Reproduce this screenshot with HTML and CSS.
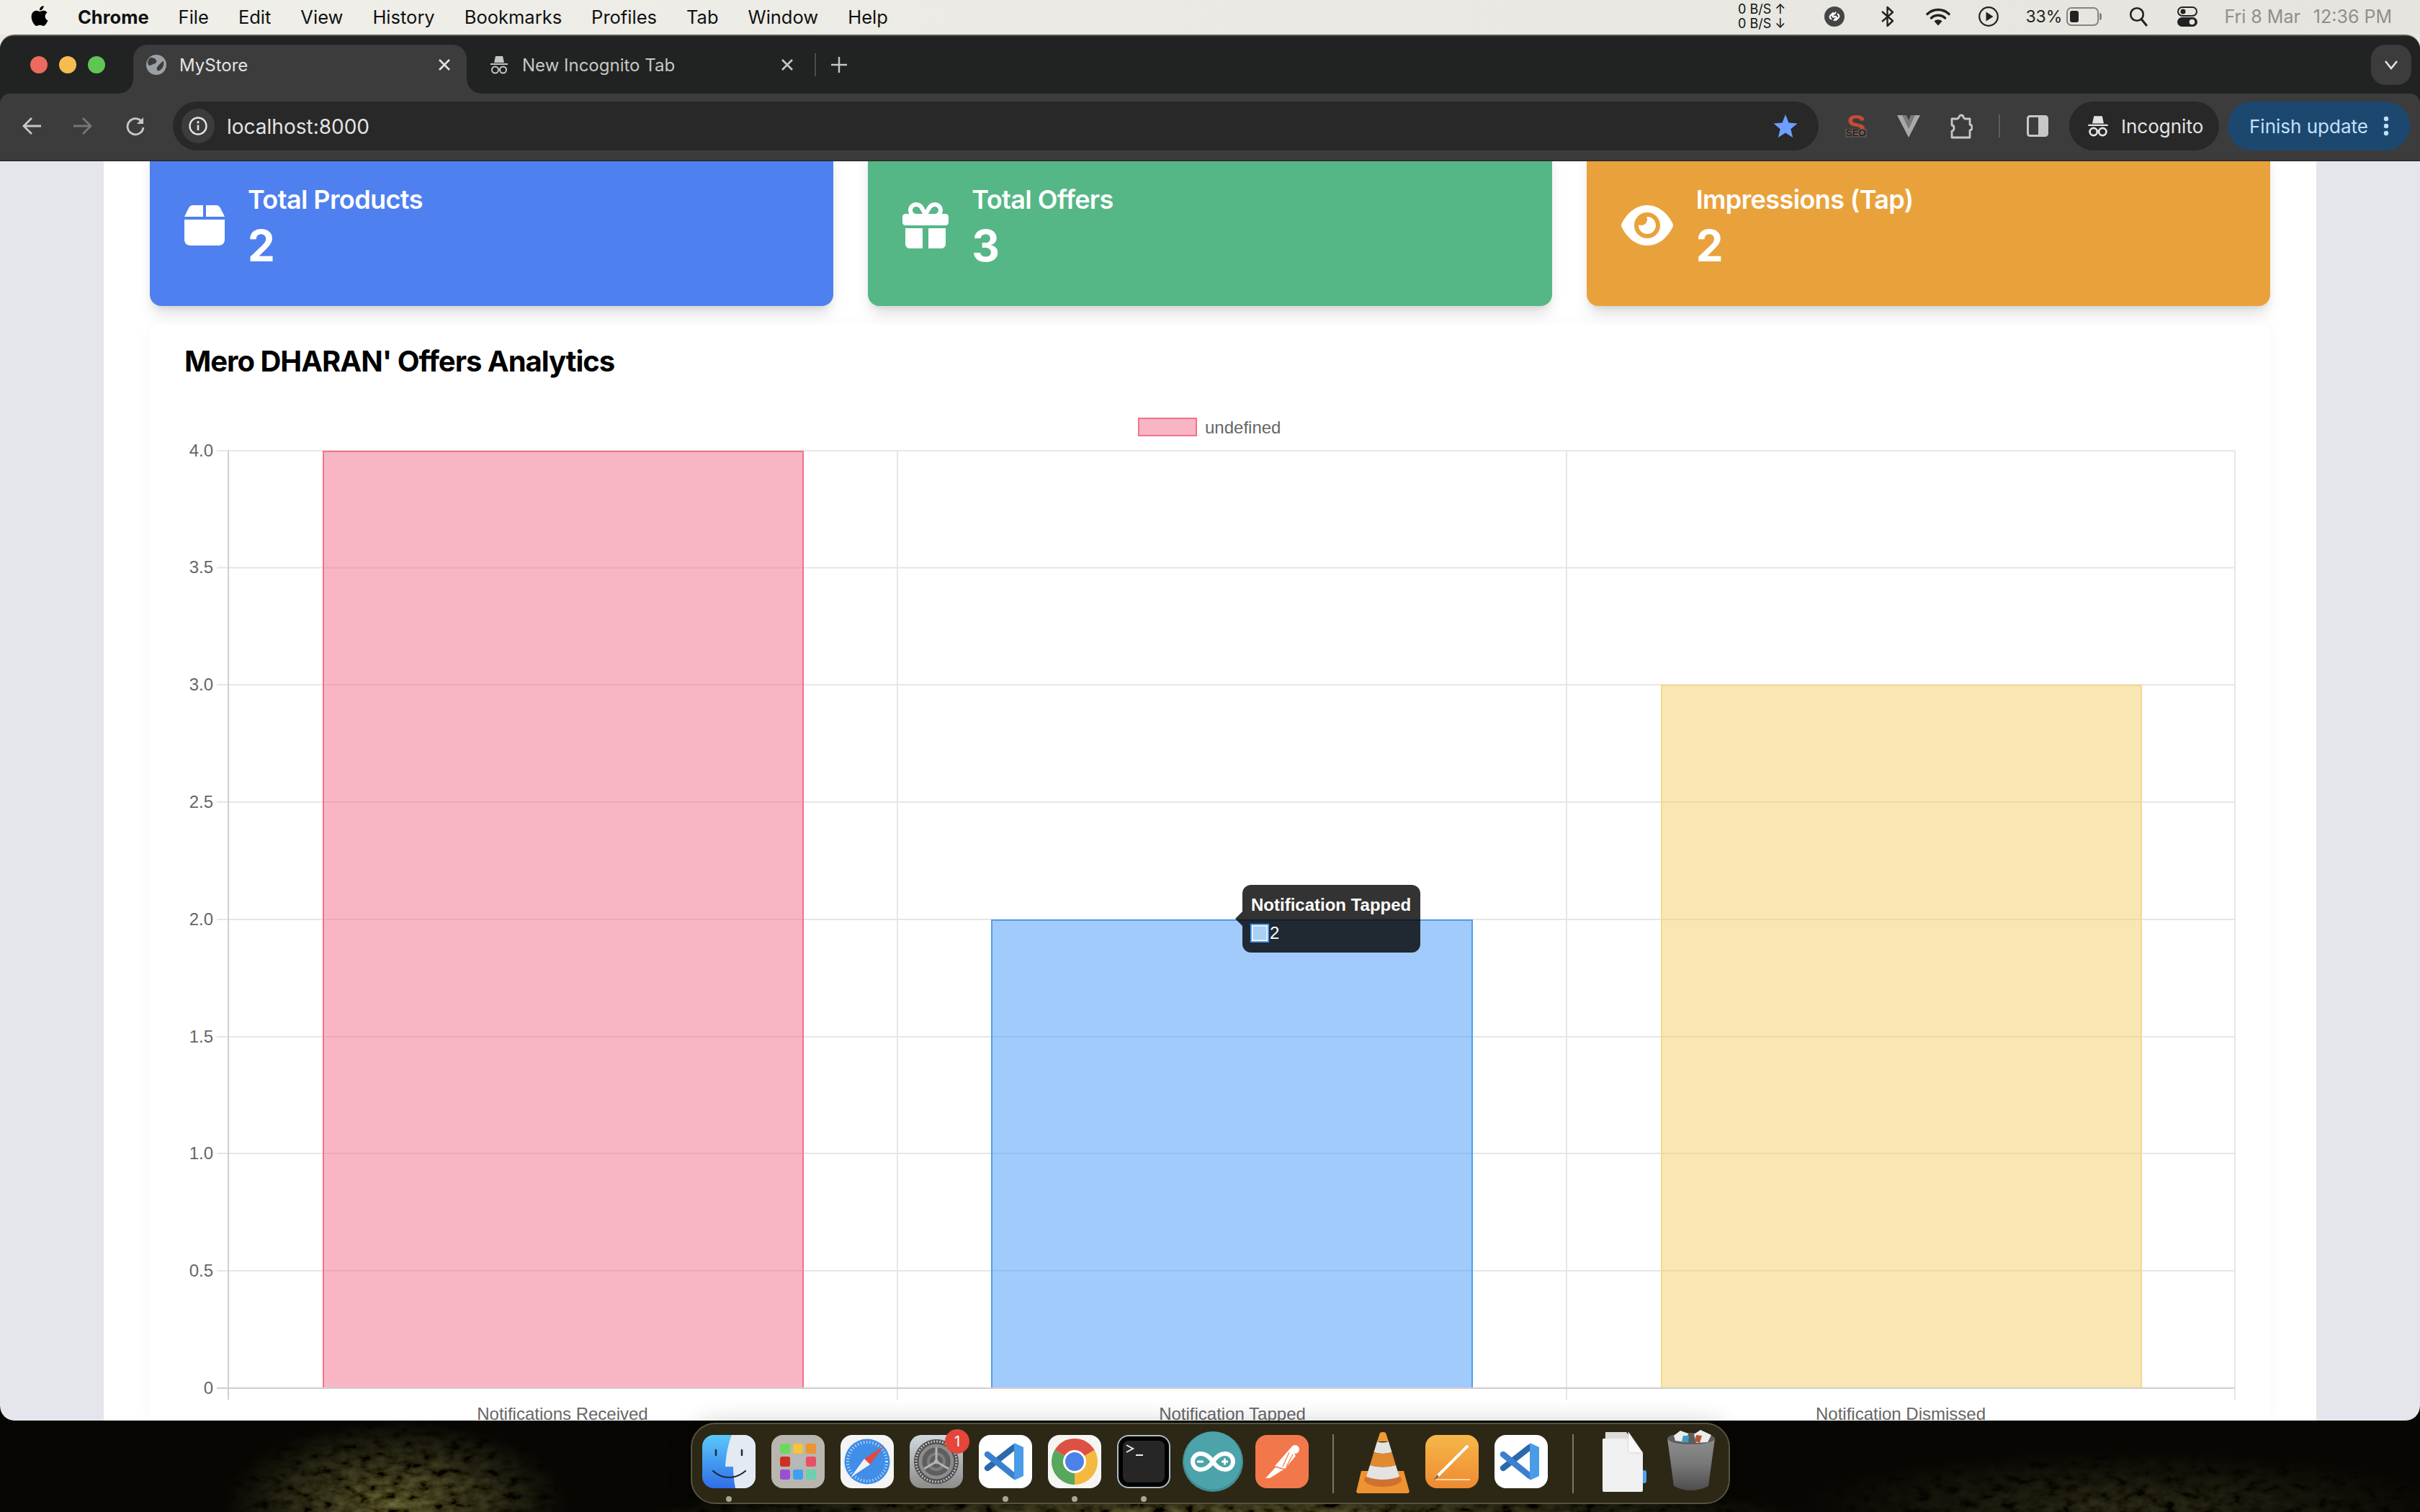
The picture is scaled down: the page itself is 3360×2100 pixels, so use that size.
FILE: index.html
```html
<!DOCTYPE html>
<html lang="en">

<head>
    <meta charset="UTF-8">
    <title>MyStore</title>
    <link rel="stylesheet" href="styles.css">
</head>

<body>
    <!-- mac menu bar -->
    <header class="menubar">
        <svg class="apple" viewBox="0 0 24 24"><path d="M12.152 6.896c-.948 0-2.415-1.078-3.96-1.04-2.04.027-3.91 1.183-4.961 3.014-2.117 3.675-.546 9.103 1.519 12.09 1.013 1.454 2.208 3.09 3.792 3.039 1.52-.065 2.09-.987 3.935-.987 1.831 0 2.35.987 3.96.948 1.637-.026 2.676-1.48 3.676-2.948 1.156-1.688 1.636-3.325 1.662-3.415-.039-.013-3.182-1.221-3.22-4.857-.026-3.04 2.48-4.494 2.597-4.559-1.429-2.09-3.623-2.324-4.39-2.376-2-.156-3.675 1.09-4.61 1.09zM15.53 3.83c.843-1.012 1.4-2.427 1.245-3.83-1.207.052-2.662.805-3.532 1.818-.78.896-1.454 2.338-1.273 3.714 1.338.104 2.715-.688 3.559-1.701"/></svg>
        <nav class="menu">
            <b>Chrome</b><span>File</span><span>Edit</span><span>View</span><span>History</span><span>Bookmarks</span><span>Profiles</span><span>Tab</span><span>Window</span><span>Help</span>
        </nav>
        <div class="status">
            <div class="netspeed"><span>0 B/S ↑</span><span>0 B/S ↓</span></div>
            <svg class="st-shazam" width="28" height="28" viewBox="0 0 28 28"><circle cx="14" cy="14" r="14" fill="#454545"/><path d="M12 9 8.500 12.500a2.800 2.800 0 0 0 0 4l.8.800M16 19l3.500-3.500a2.800 2.800 0 0 0 0-4l-.8-.8M15.500 8.500l-4 4a1.500 1.500 0 0 0 2 2l1 -.5a1.500 1.500 0 0 1 2 2l-3 3" fill="none" stroke="#fff" stroke-width="2.200" stroke-linecap="round"/></svg>
            <svg class="st-bt" width="20" height="30" viewBox="0 0 20 30"><path d="M2 8 17 21 9.500 28V2L17 9 2 22" fill="none" stroke="#222" stroke-width="2.400" stroke-linejoin="round"/></svg>
            <svg class="st-wifi" width="34" height="26" viewBox="0 0 34 26"><path d="M2 9.500C10.500 1.500 23.500 1.500 32 9.500M7.500 15C13 10 21 10 26.500 15" fill="none" stroke="#222" stroke-width="3.400" stroke-linecap="round"/><path d="M11.500 19.500C14.500 16.500 19.500 16.500 22.500 19.500L17 25.500Z" fill="#222"/></svg>
            <svg class="st-play" width="28" height="28" viewBox="0 0 28 28"><circle cx="14" cy="14" r="12.800" fill="none" stroke="#222" stroke-width="2.200"/><path d="M10.500 7.500 20.500 14 10.500 20.500Z" fill="#222"/></svg>
            <span class="st-pct">33%</span>
            <div class="st-battery"><i></i></div>
            <svg class="st-search" width="26" height="28" viewBox="0 0 26 28"><circle cx="11" cy="11" r="8.800" fill="none" stroke="#222" stroke-width="2.600"/><path d="M17.500 18 24 26" stroke="#222" stroke-width="3" stroke-linecap="round"/></svg>
            <svg class="st-control" width="28" height="28" viewBox="0 0 28 28"><rect x="1" y="1" width="26" height="12" rx="6" fill="none" stroke="#222" stroke-width="2"/><circle cx="8" cy="7" r="3.500" fill="#222"/><rect y="15" width="28" height="13" rx="6.500" fill="#222"/><circle cx="20.500" cy="21.500" r="3.800" fill="#e6e5df"/></svg>
            <span class="st-date"><span>Fri 8 Mar</span><span>12:36 PM</span></span>
        </div>
    </header>

    <!-- chrome window -->
    <main class="window">
        <div class="tabstrip">
            <div class="lights"><i class="red"></i><i class="amber"></i><i class="green"></i></div>
            <div class="tab active">
                <svg class="favicon" width="28" height="28" viewBox="0 0 28 28"><circle cx="14" cy="14" r="14" fill="#9aa0a6"/><path d="M6 4c4 0 7 1 8 4s-1 4-4 5-5 3-7 1C1 10 3 6 6 4ZM24 9c1 3 0 8-3 11s-5 3-6 1 0-4 2-6 4-5 7-6Z" fill="#3c3c3c"/></svg>
                <span class="tab-title">MyStore</span>
                <svg class="tab-close" width="24" height="24" viewBox="0 0 24 24"><path d="M5 5 19 19M19 5 5 19" stroke="#e3e3e3" stroke-width="2.600"/></svg>
            </div>
            <div class="tab">
                <svg class="favicon" width="28" height="28" viewBox="0 0 28 28"><path d="M9 2h10l2 9H7ZM2 12h24v2H2Z" fill="#c4c7c5"/><g fill="none" stroke="#c4c7c5" stroke-width="2"><circle cx="8.500" cy="21" r="4.500"/><circle cx="19.500" cy="21" r="4.500"/></g></svg>
                <span class="tab-title">New Incognito Tab</span>
                <svg class="tab-close" width="24" height="24" viewBox="0 0 24 24"><path d="M5 5 19 19M19 5 5 19" stroke="#c4c7c5" stroke-width="2.600"/></svg>
            </div>
            <i class="tab-sep"></i>
            <svg class="new-tab" width="24" height="24" viewBox="0 0 24 24"><path d="M12 1V23M1 12H23" stroke="#c4c7c5" stroke-width="2.400"/></svg>
            <div class="tab-search">
                <svg width="20" height="14" viewBox="0 0 20 14"><path d="M2 2 10 12 18 2" fill="none" stroke="#e3e3e3" stroke-width="2.600"/></svg>
            </div>
        </div>

        <div class="toolbar">
            <svg class="tb-back" width="28" height="28" viewBox="0 0 28 28"><path d="M27 14H3M14 3 3 14 14 25" fill="none" stroke="#c7c7c7" stroke-width="2.800"/></svg>
            <svg class="tb-fwd" width="28" height="28" viewBox="0 0 28 28"><path d="M1 14H25M14 3 25 14 14 25" fill="none" stroke="#777" stroke-width="2.800"/></svg>
            <svg class="tb-reload" width="28" height="28" viewBox="0 0 28 28"><path d="M24 10A11 11 0 1 0 25 16" fill="none" stroke="#c7c7c7" stroke-width="2.800"/><path d="M25 2V11H16Z" fill="#c7c7c7"/></svg>
            <div class="omnibox">
                <div class="site-chip">
                    <svg width="26" height="26" viewBox="0 0 26 26"><circle cx="13" cy="13" r="11.500" fill="none" stroke="#e3e3e3" stroke-width="2.400"/><path d="M13 11.500V19" stroke="#e3e3e3" stroke-width="2.600"/><circle cx="13" cy="7.800" r="1.700" fill="#e3e3e3"/></svg>
                </div>
                <span class="url">localhost:8000</span>
                <svg class="star" width="34" height="32" viewBox="0 0 34 32"><path d="M17 0 21.500 11.500 33.500 12.500 24.300 20.300 27.200 32 17 25.600 6.800 32 9.700 20.300 .5 12.500 12.500 11.500Z" fill="#6e9eff"/></svg>
            </div>
            <div class="ext ext-seo"><span class="seo-s">S</span><span class="seo-tag">SEO</span></div>
            <svg class="ext ext-v" width="32" height="32" viewBox="0 0 32 32"><path d="M0 1H10L16 14 22 1H32L16 32Z" fill="#a9a9a9"/><path d="M7 1H13L16 8 19 1H25L16 20Z" fill="#7a7a7a"/></svg>
            <svg class="ext ext-puzzle" width="32" height="36" viewBox="0 0 32 36"><path d="M3 8H11L13 6C13 2 19 2 19 6L21 8H28V16C32 16 32 24 28 24V34H3V25C7 24 7 17 3 17Z" fill="none" stroke="#c7c7c7" stroke-width="2.800" stroke-linejoin="round"/></svg>
            <i class="tb-sep"></i>
            <svg class="tb-panel" width="30" height="30" viewBox="0 0 30 30"><rect x="1.500" y="1.500" width="27" height="27" rx="3" fill="none" stroke="#c7c7c7" stroke-width="3"/><rect x="16" y="2" width="12" height="26" fill="#c7c7c7"/></svg>
            <div class="pill incognito">
                <svg width="32" height="32" viewBox="0 0 28 28"><path d="M9 2h10l2 9H7ZM2 12h24v2H2Z" fill="#e3e3e3"/><g fill="none" stroke="#e3e3e3" stroke-width="2.400"><circle cx="8.500" cy="21" r="4.500"/><circle cx="19.500" cy="21" r="4.500"/></g></svg>
                <span>Incognito</span>
            </div>
            <div class="pill update">
                <span>Finish update</span>
                <svg width="8" height="28" viewBox="0 0 8 28"><circle cx="4" cy="4" r="3.200"/><circle cx="4" cy="14" r="3.200"/><circle cx="4" cy="24" r="3.200"/></svg>
            </div>
        </div>

        <div class="viewport">
            <div class="page">
                <section class="stats">
                    <div class="stat stat-blue">
                        <svg class="stat-icon" width="56" height="64" viewBox="0 0 448 512"><path d="M50.7 58.5L0 160H208V32H93.7C75.500 32 58.900 42.300 50.700 58.500zM240 160H448L397.300 58.500C389.100 42.300 372.500 32 354.300 32H240V160zM448 192H0V416c0 35.300 28.700 64 64 64H384c35.300 0 64-28.700 64-64V192z"/></svg>
                        <div>
                            <h3>Total Products</h3>
                            <p>2</p>
                        </div>
                    </div>
                    <div class="stat stat-green">
                        <svg class="stat-icon" width="64" height="64" viewBox="0 0 512 512"><path d="M190.500 68.800L225.300 128H224 152c-22.100 0-40-17.900-40-40s17.900-40 40-40h2.200c14.900 0 28.800 7.900 36.300 20.800zM64 88c0 14.400 3.500 28 9.600 40H32c-17.700 0-32 14.300-32 32v64c0 17.700 14.300 32 32 32H480c17.700 0 32-14.300 32-32V160c0-17.700-14.300-32-32-32H438.400c6.100-12 9.600-25.600 9.600-40c0-48.600-39.400-88-88-88h-2.200c-31.900 0-61.500 16.900-77.700 44.400L256 85.500l-24.100-41C215.700 16.900 186.100 0 154.200 0H152C103.400 0 64 39.400 64 88zm336 0c0 22.100-17.900 40-40 40H288h-1.300l34.800-59.200C329.100 55.900 342.900 48 357.800 48H360c22.100 0 40 17.900 40 40zM32 288V464c0 26.500 21.500 48 48 48H224V288H32zM288 512H432c26.500 0 48-21.500 48-48V288H288V512z"/></svg>
                        <div>
                            <h3>Total Offers</h3>
                            <p>3</p>
                        </div>
                    </div>
                    <div class="stat stat-orange">
                        <svg class="stat-icon" width="72" height="64" viewBox="0 0 576 512"><path d="M288 32c-80.800 0-145.500 36.800-192.600 80.600C48.600 156 17.300 208 2.500 243.700c-3.300 7.900-3.300 16.700 0 24.600C17.300 304 48.600 356 95.400 399.400C142.500 443.200 207.200 480 288 480s145.500-36.800 192.600-80.600c46.800-43.500 78.100-95.400 93-131.100c3.300-7.900 3.300-16.700 0-24.600c-14.900-35.700-46.200-87.700-93-131.100C433.500 68.800 368.800 32 288 32zM144 256a144 144 0 1 1 288 0 144 144 0 1 1 -288 0zm144-64c0 35.300-28.700 64-64 64c-7.100 0-13.900-1.200-20.300-3.300c-5.500-1.800-11.900 1.600-11.700 7.400c.3 6.900 1.300 13.800 3.200 20.700c13.700 51.200 66.400 81.600 117.600 67.900s81.600-66.400 67.900-117.600c-11.100-41.500-47.800-69.400-88.600-71.100c-5.800-.2-9.200 6.100-7.400 11.700c2.100 6.400 3.300 13.200 3.300 20.300z"/></svg>
                        <div>
                            <h3>Impressions (Tap)</h3>
                            <p>2</p>
                        </div>
                    </div>
                </section>

                <section class="chart-card">
                    <h2>Mero DHARAN' Offers Analytics</h2>
                    <svg class="chart" width="2848" height="1420" viewBox="256 560 2848 1420">
                        <rect class="legend-box" x="1581" y="581" width="80" height="24"/>
                        <text class="chart-text" x="1673" y="602">undefined</text>

                        <g class="grid">
                            <line x1="301" x2="3103" y1="626" y2="626"/>
                            <line x1="301" x2="3103" y1="788.500" y2="788.500"/>
                            <line x1="301" x2="3103" y1="951" y2="951"/>
                            <line x1="301" x2="3103" y1="1114" y2="1114"/>
                            <line x1="301" x2="3103" y1="1277" y2="1277"/>
                            <line x1="301" x2="3103" y1="1440" y2="1440"/>
                            <line x1="301" x2="3103" y1="1602" y2="1602"/>
                            <line x1="301" x2="3103" y1="1765" y2="1765"/>
                            <line x1="1246" x2="1246" y1="626" y2="1944"/>
                            <line x1="2175" x2="2175" y1="626" y2="1944"/>
                            <line x1="3103" x2="3103" y1="626" y2="1944"/>
                        </g>
                        <g class="axis">
                            <line x1="317" x2="317" y1="626" y2="1944"/>
                            <line x1="301" x2="3103" y1="1928" y2="1928"/>
                        </g>

                        <g class="chart-text ticks">
                            <text x="296" y="634">4.0</text>
                            <text x="296" y="796">3.5</text>
                            <text x="296" y="959">3.0</text>
                            <text x="296" y="1122">2.5</text>
                            <text x="296" y="1285">2.0</text>
                            <text x="296" y="1448">1.5</text>
                            <text x="296" y="1610">1.0</text>
                            <text x="296" y="1773">0.5</text>
                            <text x="296" y="1936">0</text>
                        </g>

                        <rect class="bar-pink" x="448" y="626" width="668" height="1301"/>
                        <path class="edge-pink" d="M449 1927V627H1115V1927"/>
                        <rect class="bar-blue" x="1376" y="1277" width="669" height="650"/>
                        <path class="edge-blue" d="M1377 1927V1278H2044V1927"/>
                        <rect class="bar-yellow" x="2306" y="951" width="668" height="976"/>
                        <path class="edge-yellow" d="M2307 1927V952H2973V1927"/>

                        <g class="chart-text labels">
                            <text x="781" y="1972">Notifications Received</text>
                            <text x="1711" y="1972">Notification Tapped</text>
                            <text x="2639" y="1972">Notification Dismissed</text>
                        </g>
                    </svg>
                    <div class="tooltip">
                        <strong>Notification Tapped</strong>
                        <div class="tooltip-row"><i></i><span>2</span></div>
                    </div>
                </section>
            </div>
        </div>
    </main>

    <!-- desktop and dock -->
    <footer class="desktop">
        <svg class="wallpaper" width="3360" height="127" viewBox="0 0 3360 127">
            <defs>
                <filter id="leaves" x="0" y="0" width="100%" height="100%">
                    <feTurbulence type="fractalNoise" baseFrequency="0.05 0.09" numOctaves="3" seed="7"/>
                    <feColorMatrix values="0 0 0 1 -.25  0 0 0 .95 -.25  0 0 0 .3 -.1  0 0 0 0 1"/>
                </filter>
                <radialGradient id="patch">
                    <stop offset="0" stop-color="#fff"/>
                    <stop offset="1" stop-color="#000"/>
                </radialGradient>
                <mask id="patches">
                    <ellipse cx="550" cy="115" rx="240" ry="115" fill="url(#patch)"/>
                    <ellipse cx="1700" cy="135" rx="820" ry="60" fill="url(#patch)"/>
                    <ellipse cx="2950" cy="120" rx="460" ry="80" fill="url(#patch)" opacity=".4"/>
                </mask>
            </defs>
            <rect class="leaves" width="3360" height="127" filter="url(#leaves)" mask="url(#patches)"/>
        </svg>

        <div class="dock">
            <!-- finder -->
            <svg class="dock-icon" width="74" height="74" viewBox="0 0 74 74">
                <defs>
                    <linearGradient id="finderBlue" x1="0" y1="0" x2="0" y2="1"><stop offset="0" stop-color="#5ac8fb"/><stop offset="1" stop-color="#2f6ee8"/></linearGradient>
                    <clipPath id="squircle"><rect width="74" height="74" rx="16"/></clipPath>
                </defs>
                <g clip-path="url(#squircle)">
                    <rect width="74" height="74" fill="url(#finderBlue)"/>
                    <path d="M41 0H74V74H46C44 64 43 54 43 44H32C33 28 36 12 41 0Z" fill="#e4eaf2"/>
                </g>
                <path d="M19 21V28M55 21V28" stroke="#1f2a3a" stroke-width="2.500" stroke-linecap="round"/>
                <path d="M15 50C28 62 46 62 60 50" fill="none" stroke="#1f2a3a" stroke-width="2.200" stroke-linecap="round"/>
            </svg>
            <!-- launchpad -->
            <svg class="dock-icon" width="74" height="74" viewBox="0 0 74 74">
                <rect width="74" height="74" rx="16" fill="#b9b6af"/>
                <rect x="12" y="12" width="14" height="14" rx="3" fill="#6bd95e"/>
                <rect x="30" y="12" width="14" height="14" rx="3" fill="#f6c33a"/>
                <rect x="48" y="12" width="14" height="14" rx="3" fill="#ee9430"/>
                <rect x="12" y="30" width="14" height="14" rx="3" fill="#cd3023"/>
                <rect x="30" y="30" width="14" height="14" rx="3" fill="#b5b9bc"/>
                <rect x="48" y="30" width="14" height="14" rx="3" fill="#e84f66"/>
                <rect x="12" y="48" width="14" height="14" rx="3" fill="#9a4fd0"/>
                <rect x="30" y="48" width="14" height="14" rx="3" fill="#3f9ff5"/>
                <rect x="48" y="48" width="14" height="14" rx="3" fill="#6bd0ae"/>
            </svg>
            <!-- safari -->
            <svg class="dock-icon" width="74" height="74" viewBox="0 0 74 74">
                <rect width="74" height="74" rx="16" fill="#f4f4f4"/>
                <circle cx="37" cy="37" r="31.500" fill="#3f8ee8"/>
                <circle cx="37" cy="37" r="27" fill="none" stroke="#dcebfa" stroke-width="4" stroke-dasharray="1 3.200"/>
                <path d="M60 15 41 41 33 33Z" fill="#e5483c"/>
                <path d="M14 59 33 33 41 41Z" fill="#f2f2f2"/>
            </svg>
            <!-- system settings -->
            <div class="dock-badged">
                <svg class="dock-icon" width="74" height="74" viewBox="0 0 74 74">
                    <defs><linearGradient id="settingsBg" x1="0" y1="0" x2="0" y2="1"><stop offset="0" stop-color="#cfd9de"/><stop offset="1" stop-color="#8d8d8b"/></linearGradient></defs>
                    <rect width="74" height="74" rx="16" fill="url(#settingsBg)"/>
                    <circle cx="37" cy="37" r="31" fill="#4e4e4e"/>
                    <circle cx="37" cy="37" r="28" fill="none" stroke="#c9c9c9" stroke-width="3" stroke-dasharray="1.800 2.200"/>
                    <circle cx="37" cy="37" r="22" fill="none" stroke="#8c8c8c" stroke-width="5"/>
                    <circle cx="37" cy="37" r="19" fill="#5f5f5f"/>
                    <circle cx="37" cy="37" r="11" fill="none" stroke="#7d7d7d" stroke-width="4"/>
                    <path d="M37 37V17M37 37 20 47M37 37 54 47" stroke="#b5b5b5" stroke-width="3"/>
                    <circle cx="37" cy="37" r="3" fill="#b5b5b5"/>
                </svg>
                <span class="badge">1</span>
            </div>
            <!-- vscode -->
            <svg class="dock-icon" width="74" height="74" viewBox="0 0 74 74">
                <g id="vscode">
                    <rect width="74" height="74" rx="16" fill="#fff"/>
                    <path d="M12 46 49 17" stroke="#2a69ae" stroke-width="8.500" stroke-linecap="round"/>
                    <path d="M12 27 49 57" stroke="#3b80cf" stroke-width="8.500" stroke-linecap="round"/>
                    <path d="M49 11 62 17V57L49 63Z" fill="#4a9be8"/>
                </g>
            </svg>
            <!-- chrome -->
            <svg class="dock-icon" width="74" height="74" viewBox="0 0 74 74">
                <rect width="74" height="74" rx="16" fill="#f5f5f3"/>
                <path d="M37 37 9.300 21A32 32 0 0 1 64.700 21Z" fill="#dd5144"/>
                <path d="M37 37 64.700 21A32 32 0 0 1 37 69Z" fill="#f4b93f"/>
                <path d="M37 37 37 69A32 32 0 0 1 9.300 21Z" fill="#57a75d"/>
                <circle cx="37" cy="37" r="16" fill="#fff"/>
                <circle cx="37" cy="37" r="13" fill="#4c82e8"/>
            </svg>
            <!-- terminal -->
            <svg class="dock-icon" width="74" height="74" viewBox="0 0 74 74">
                <rect width="74" height="74" rx="16" fill="#aebcc4"/>
                <rect x="2" y="2" width="70" height="70" rx="14" fill="#000"/>
                <rect x="8" y="8" width="58" height="58" rx="8" fill="#262626"/>
                <path d="M13 14 22 19 13 24" fill="none" stroke="#eee" stroke-width="2"/>
                <path d="M26 28H36" stroke="#eee" stroke-width="2"/>
            </svg>
            <!-- arduino -->
            <svg class="dock-icon dock-round" width="84" height="84" viewBox="0 0 84 84">
                <circle cx="42" cy="42" r="42" fill="#3f8f96"/>
                <circle cx="42" cy="40.500" r="40" fill="#4ca3aa"/>
                <path d="M42 42C36 33 30 31 25 31A11 11 0 0 0 25 53C30 53 36 51 42 42C48 33 54 31 59 31A11 11 0 0 1 59 53C54 53 48 51 42 42Z" fill="none" stroke="#fff" stroke-width="6"/>
                <path d="M20 42H29M54 42H63M58.500 37.500V46.500" stroke="#fff" stroke-width="2.800"/>
            </svg>
            <!-- postman -->
            <svg class="dock-icon" width="74" height="74" viewBox="0 0 74 74">
                <rect width="74" height="74" rx="16" fill="#f2784b"/>
                <circle cx="55" cy="20" r="6" fill="#fff"/>
                <path d="M49 18 56 29 41 47 27 43Z" fill="#fff"/>
                <path d="M28 45 39 48 20 60H14Z" fill="#fff"/>
                <path d="M47 24 38 44M52 27 43 44" stroke="#f2784b" stroke-width="1.200"/>
            </svg>
            <i class="dock-sep sep-first"></i>
            <!-- vlc -->
            <svg class="dock-icon dock-vlc" width="74" height="85" viewBox="0 0 74 85">
                <path d="M7 54H66L74 83 72 85H2L0 83Z" fill="#ee9330"/>
                <ellipse cx="37" cy="66" rx="26" ry="10" fill="#cf7230"/>
                <path d="M33 1Q37-1 41 1L45 13H29Z" fill="#ef9a34"/>
                <path d="M29 13Q37 16 45 13L49.600 28Q37 32 24.400 28Z" fill="#e3e3e3"/>
                <path d="M24.400 28Q37 32 49.600 28L55 46Q37 51 19 46Z" fill="#e28a30"/>
                <path d="M19 46Q37 51 55 46L60 62Q37 70 14 62Z" fill="#e3e3e3"/>
            </svg>
            <!-- pages -->
            <svg class="dock-icon" width="74" height="74" viewBox="0 0 74 74">
                <defs><linearGradient id="pagesBg" x1="0" y1="0" x2="0" y2="1"><stop offset="0" stop-color="#f6b84a"/><stop offset="1" stop-color="#ee8a32"/></linearGradient></defs>
                <rect width="74" height="74" rx="16" fill="url(#pagesBg)"/>
                <path d="M14 62H62" stroke="#f8d9a8" stroke-width="2"/>
                <path d="M16 58 58 16" stroke="#fff" stroke-width="4" stroke-linecap="round"/>
                <path d="M12 63 16 55 19 58Z" fill="#8a5a2a"/>
            </svg>
            <!-- vscode, second copy -->
            <svg class="dock-icon" width="74" height="74" viewBox="0 0 74 74"><use href="#vscode"/></svg>
            <i class="dock-sep sep-second"></i>
            <!-- document stack -->
            <svg class="dock-icon dock-doc" width="62" height="87" viewBox="0 0 62 87">
                <path d="M4 4H33L55 32V60H3Z" fill="#dcdcdc"/>
                <path d="M55 57H58Q61 57 61 60V72Q61 75 58 75H55Z" fill="#4ba3ee"/>
                <path d="M1 13H36L56 33V85Q56 87 54 87H2Q0 87 0 85V14Z" fill="#f0f0f0"/>
                <path d="M36 4 56 33H40Q35 33 35 28Z" fill="#f8f8f8" stroke="#cfcfcf" stroke-width=".8"/>
            </svg>
            <!-- trash -->
            <svg class="dock-icon dock-trash" width="66" height="85" viewBox="0 0 66 85">
                <defs><linearGradient id="binBg" x1="0" y1="0" x2="0" y2="1"><stop offset="0" stop-color="#8e8e8e"/><stop offset=".5" stop-color="#777"/><stop offset="1" stop-color="#4d4d4d"/></linearGradient></defs>
                <path d="M0 12Q33 26 66 12L57 78Q33 90 9 78Z" fill="url(#binBg)"/>
                <ellipse cx="33" cy="12" rx="33" ry="8" fill="#5d5d5d"/>
                <path d="M9 8 18 1 29 5 25 17 11 15ZM37 6 46 0 61 7 56 17 40 18Z" fill="#ececec"/>
                <path d="M22 8 30 8 29 18 20 16Z" fill="#3d9bc4"/>
                <path d="M40 7 48 8 45 18 38 16Z" fill="#b5552f"/>
            </svg>
            <!-- running indicators -->
            <i class="dock-dot dot-a"></i><i class="dock-dot dot-b"></i><i class="dock-dot dot-c"></i><i class="dock-dot dot-d"></i>
        </div>
    </footer>
</body>

</html>
```

FILE: styles.css
```css
* {
    box-sizing: border-box;
}

html,
body {
    margin: 0;
    height: 2100px;
    overflow: hidden;
}

body {
    width: 3360px;
    display: flex;
    flex-direction: column;
    background: linear-gradient(#e9e8e2 0, #e9e8e2 80px, #070603 81px);
    font-family: Inter, "Liberation Sans", sans-serif;
}

/* menu bar */
.menubar {
    height: 48px;
    flex: none;
    display: flex;
    align-items: center;
    padding: 0 39px 2px 41px;
    background: linear-gradient(90deg, #f0efea, #e5e4de);
    color: #111;
    font-size: 25.500px;
}

.apple {
    width: 28px;
    height: 30px;
    fill: #000;
    margin-bottom: 2px;
}

.menu {
    display: flex;
    gap: 41px;
    margin-left: 39px;
}

.status {
    margin-left: auto;
    display: flex;
    align-items: center;
}

.netspeed {
    display: flex;
    flex-direction: column;
    font-size: 18px;
    line-height: 20px;
    white-space: nowrap;
}

.st-shazam { margin-left: 54px; }
.st-bt { margin-left: 50px; }
.st-wifi { margin-left: 43px; }
.st-play { margin-left: 39px; }
.st-pct { margin-left: 37px; font-size: 23px; color: #222; }

.st-battery {
    width: 45px;
    height: 26px;
    margin-left: 6px;
    padding: 3px;
    position: relative;
    border: 2px solid #85847f;
    border-radius: 7px;
}

.st-battery::after {
    content: "";
    position: absolute;
    right: -6px;
    top: 6px;
    width: 3px;
    height: 10px;
    border-radius: 0 3px 3px 0;
    background: #85847f;
}

.st-battery i {
    display: block;
    width: 12px;
    height: 100%;
    background: #222;
    border-radius: 3px;
}

.st-search { margin-left: 42px; }
.st-control { margin-left: 41px; }

.st-date {
    display: flex;
    gap: 18px;
    margin-left: 37px;
    color: #8f8f8b;
    font-size: 25px;
}

/* browser window */
.window {
    height: 1925px;
    flex: none;
    display: flex;
    flex-direction: column;
    overflow: hidden;
    border-top: 2px solid #5a5a58;
    border-radius: 20px;
    background: #202322;
}

.tabstrip {
    height: 80px;
    flex: none;
    display: flex;
    align-items: center;
    padding-left: 42px;
    background: #202322;
}

.lights {
    display: flex;
    gap: 16px;
    margin-right: 39px;
}

.lights i {
    width: 24px;
    height: 24px;
    border-radius: 50%;
}

.lights .red { background: #ee6a5f; }
.lights .amber { background: #f5bd4f; }
.lights .green { background: #61c555; }

.tab {
    width: 463px;
    height: 68px;
    align-self: flex-end;
    display: flex;
    align-items: center;
    padding: 0 19px 12px 18px;
    position: relative;
    color: #e3e3e3;
    font-size: 24px;
}

.tab + .tab {
    margin-left: 13px;
    color: #c4c7c5;
}

.tab.active {
    background: #3c3c3c;
    border-radius: 20px 20px 0 0;
}

.tab.active::before,
.tab.active::after {
    content: "";
    position: absolute;
    bottom: 0;
    width: 20px;
    height: 20px;
}

.tab.active::before {
    left: -20px;
    background: radial-gradient(circle at 0 0, #202322 19.500px, #3c3c3c 20px);
}

.tab.active::after {
    right: -20px;
    background: radial-gradient(circle at 100% 0, #202322 19.500px, #3c3c3c 20px);
}

.tab-title {
    margin-left: 18px;
}

.tab-close {
    margin-left: auto;
}

.tab-sep {
    width: 2px;
    height: 32px;
    margin-left: 7px;
    background: #4a4c4b;
}

.new-tab {
    margin-left: 20px;
}

.tab-search {
    width: 56px;
    height: 56px;
    margin: 0 12px 0 auto;
    display: flex;
    align-items: center;
    justify-content: center;
    border-radius: 20px;
    background: #3c3c3c;
}

.toolbar {
    height: 94px;
    flex: none;
    display: flex;
    align-items: center;
    padding: 0 0 2px 30px;
    background: #3c3c3c;
    border-bottom: 2px solid #2e2e2e;
    border-radius: 14px 14px 0 0;
}

.tb-fwd { margin-left: 43px; }
.tb-reload { margin-left: 45px; }

.omnibox {
    width: 2285px;
    height: 68px;
    margin-left: 38px;
    display: flex;
    align-items: center;
    padding: 0 29px 0 12px;
    border-radius: 34px;
    background: #282828;
}

.site-chip {
    width: 46px;
    height: 48px;
    display: flex;
    align-items: center;
    justify-content: center;
    border-radius: 24px;
    background: #3c3c3c;
}

.url {
    margin: 2px 0 0 17px;
    color: #e3e3e3;
    font-size: 28px;
}

.star {
    margin-left: auto;
}

.ext-seo {
    width: 32px;
    height: 32px;
    margin-left: 36px;
    position: relative;
    font-family: "Liberation Sans", sans-serif;
    font-weight: 700;
    text-align: center;
}

.seo-s {
    display: block;
    color: #c94b33;
    font-size: 40px;
    line-height: 30px;
}

.seo-tag {
    position: absolute;
    left: 1px;
    right: 1px;
    bottom: 0;
    height: 12px;
    background: rgba(90, 90, 90, 0.7);
    color: #111;
    font-size: 13px;
    font-weight: 400;
    line-height: 12px;
}

.ext-v { margin-left: 41px; }
.ext-puzzle { margin-left: 41px; }

.tb-sep {
    width: 2px;
    height: 32px;
    margin-left: 36px;
    background: #5c5c5c;
}

.tb-panel { margin-left: 37px; }

.pill {
    height: 68px;
    display: flex;
    align-items: center;
    border-radius: 34px;
    font-size: 26px;
}

.pill.incognito {
    width: 208px;
    margin-left: 29px;
    padding-left: 24px;
    gap: 16px;
    background: #282828;
    color: #e3e3e3;
}

.pill.update {
    width: 253px;
    margin-left: 12px;
    padding: 0 30px;
    justify-content: space-between;
    background: #1c4870;
    color: #c2e0fa;
    white-space: nowrap;
}

.pill.update svg {
    fill: #c2e0fa;
    flex: none;
    margin-right: -1px;
}

/* page under the browser chrome, scrolled by 24px */
.viewport {
    flex: 1;
    min-height: 0;
    overflow: hidden;
    background: #e4e6eb;
    border-radius: 0 0 20px 20px;
}

.page {
    width: 3072px;
    margin: -24px 0 0 144px;
    padding: 0 64px;
    background: #fff;
}

.stats {
    display: grid;
    grid-template-columns: repeat(3, 1fr);
    gap: 48px;
}

.stat {
    height: 225px;
    display: flex;
    align-items: center;
    gap: 32px;
    padding: 0 48px;
    border-radius: 16px;
    color: #fff;
    box-shadow: 0 14px 20px -4px rgba(0, 0, 0, 0.13), 0 6px 8px -4px rgba(0, 0, 0, 0.08);
}

.stat-blue { background: #4f80ef; }
.stat-green { background: #55b786; }
.stat-orange { background: #e9a23b; }

.stat-icon {
    fill: #fff;
    flex: none;
}

.stat h3 {
    margin: 0;
    font-size: 36px;
    font-weight: 600;
    letter-spacing: -0.6px;
    line-height: 56px;
}

.stat p {
    margin: 0;
    font-size: 60px;
    font-weight: 700;
    line-height: 72px;
}

.chart-card {
    margin-top: 24px;
    padding: 24px 48px 0;
    position: relative;
    border-radius: 16px;
    box-shadow: 0 0 24px rgba(0, 0, 0, 0.03);
}

.chart-card h2 {
    margin: 1px 0 30px;
    color: #000;
    font-size: 40px;
    font-weight: 700;
    letter-spacing: -1px;
    line-height: 56px;
}

.chart {
    display: block;
}

.chart-text {
    fill: #666;
    font-family: "Liberation Sans", sans-serif;
    font-size: 24px;
}

.ticks { text-anchor: end; }
.labels { text-anchor: middle; }

.legend-box {
    fill: #f8b6c4;
    stroke: #f47189;
    stroke-width: 2;
}

.grid line {
    stroke: #e6e6e6;
    stroke-width: 2;
}

.axis line {
    stroke: #cfcfcf;
    stroke-width: 2;
}

.bar-pink { fill: rgba(241, 110, 137, 0.5); }
.bar-blue { fill: rgba(67, 151, 247, 0.5); }
.bar-yellow { fill: rgba(245, 205, 103, 0.5); }

.edge-pink,
.edge-blue,
.edge-yellow {
    fill: none;
    stroke-width: 2;
}

.edge-pink { stroke: #f47189; }
.edge-blue { stroke: #4f9fef; }
.edge-yellow { stroke: #f5d98c; }

.tooltip {
    position: absolute;
    left: 1517px;
    top: 780px;
    width: 247px;
    height: 94px;
    padding: 11px 12px;
    border-radius: 12px;
    background: rgba(0, 0, 0, 0.8);
    color: #fff;
    font-family: "Liberation Sans", sans-serif;
    font-size: 24px;
    line-height: 34px;
    white-space: nowrap;
}

.tooltip::before {
    content: "";
    position: absolute;
    left: -10px;
    top: 37px;
    border: 10px solid transparent;
    border-left: 0;
    border-right-color: rgba(0, 0, 0, 0.8);
}

.tooltip strong {
    display: block;
}

.tooltip-row {
    display: flex;
    align-items: center;
    gap: 1px;
    margin-top: 5px;
    margin-left: -1px;
}

.tooltip-row i {
    width: 26px;
    height: 26px;
    border: 2px solid #4f9fef;
    background: #a9d0f3;
    box-shadow: inset 0 0 0 1.500px #fff;
}

/* desktop */
.desktop {
    flex: 1;
    position: relative;
    display: flex;
    justify-content: center;
    padding-top: 3px;
}

.wallpaper {
    position: absolute;
    left: 0;
    top: 0;
}

.leaves {
    opacity: 0.55;
}

.dock {
    width: 1443px;
    height: 113px;
    position: relative;
    z-index: 2;
    display: flex;
    align-items: flex-start;
    margin-left: 1px;
    padding: 15px 0 0 14px;
    gap: 22px;
    border: 2px solid #55533f;
    border-radius: 34px;
    background: #2d2815;
    box-shadow: 0 0 34px rgba(0, 0, 0, 0.2);
}

.dock-icon {
    flex: none;
    display: block;
}

.dock-badged {
    position: relative;
    flex: none;
}

.badge {
    position: absolute;
    left: 49px;
    top: -8px;
    width: 34px;
    height: 34px;
    border-radius: 50%;
    background: #e5463a;
    color: #fff;
    font-size: 20px;
    line-height: 34px;
    text-align: center;
}

.dock-round {
    margin: -5px -5px 0;
}

.dock-vlc {
    margin: -4px 0 0 0;
}

.dock-sep {
    width: 2px;
    height: 82px;
    flex: none;
    background: #7c7860;
}

.sep-first {
    margin: -1px 9px 0 11px;
}

.sep-second {
    margin: -1px 18px 0 12px;
}

.dock-doc {
    margin: -8px 0 0 0;
}

.dock-trash {
    margin: -7px 0 0 6px;
}

.dock-dot {
    position: absolute;
    top: 100px;
    width: 8px;
    height: 8px;
    border-radius: 50%;
    background: #a8a595;
}

.dot-a { left: 47px; }
.dot-b { left: 431px; }
.dot-c { left: 527px; }
.dot-d { left: 623px; }
```
